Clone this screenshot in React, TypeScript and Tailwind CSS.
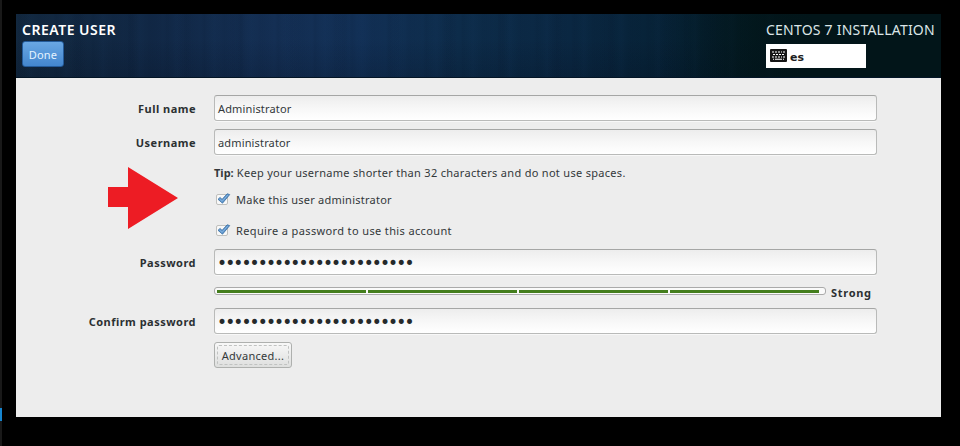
import type { ReactNode } from "react";

const BULLETS = "•".repeat(24);

function Row({ label, className, children }: { label?: string; className: string; children: ReactNode }) {
  return (
    <div className={`flex items-center ${className}`}>
      <div className="flex w-[180px] shrink-0 justify-end whitespace-nowrap pt-[2px] text-[11px] font-bold tracking-[0.48px] text-[#2b3032]">
        {label && <span>{label}</span>}
      </div>
      <div className="ml-[18px] flex h-full w-[663px] items-center">{children}</div>
    </div>
  );
}

function Field({ children }: { children: ReactNode }) {
  return (
    <div className="flex h-[26px] w-full items-center rounded-[3px] border border-[#b9bab9] border-t-[#a5a6a5] bg-linear-to-b from-[#ededed] via-[#f7f7f7] to-white pl-[3px] text-[11px] tracking-[0.15px] text-[#33383a] shadow-[0_1px_0_#f8f8f8]">
      {children}
    </div>
  );
}

function Dots() {
  return <span className="-ml-[1px] whitespace-nowrap pt-[3px] font-['DejaVu_Sans',sans-serif] text-[17px] leading-none tracking-[-1.88px] text-[#25292b]">{BULLETS}</span>;
}

function Check({ children }: { children: ReactNode }) {
  return (
    <>
      <svg className="ml-[1px] shrink-0" width="17" height="16" viewBox="0 0 17 16">
        <rect x="1.5" y="3.5" width="11" height="10" rx="1.5" fill="#f8f8f8" stroke="#c0c0bd" />
        <path d="M3 8.3 5.2 6.4 7 8.4 12.2 2.8 14.7 3.6 7.5 12.2Z" fill="#5b94cc" stroke="#376c9f" strokeWidth=".8" strokeLinejoin="round" />
        <path d="m4.5 8 2.6 2.3 5.8-6.4" fill="none" stroke="#8ab7e2" strokeWidth=".9" />
      </svg>
      <span className="ml-[4px] whitespace-nowrap pt-[2px]">{children}</span>
    </>
  );
}

function Keyboard() {
  return (
    <svg width="17" height="13" viewBox="0 0 17 13" className="mb-[2px] shrink-0">
      <rect width="17" height="13" rx="1" fill="#151515" />
      <path d="M2 3h2m1 0h2m1 0h2m1 0h1m1 0h2M3 5.5h2m1 0h2m1 0h2m1 0h2M2 8h2m1 0h2m1 0h2m1 0h1m1 0h2M3 10.2h1m1 0h7m1 0h1" stroke="#fff" strokeWidth="1.1" />
    </svg>
  );
}

export default function App() {
  return (
    <div className="relative h-[446px] w-[960px] overflow-hidden bg-black pl-4 pt-[14px] font-['Noto_Sans','Open_Sans',sans-serif] text-[#33383a]">
      <div className="absolute left-0 top-0 h-full w-[2px] bg-[#191919]" />
      <div className="absolute left-0 top-[408px] h-[13px] w-[2px] bg-[#1685cf]" />
      <div className="h-[403px] w-[925px] bg-[#ededed]">
        <header className="flex h-16 justify-between border-b border-[#031526] bg-[linear-gradient(90deg,#02151900_70%,#021519_86%),repeating-linear-gradient(90deg,#07162c00_0px,#07162c18_3px,#07162c00_8px,#1c427010_13px,#07162c00_19px,#07162c10_23px,#07162c00_37px),repeating-linear-gradient(90deg,#07162c00_0px,#07162c14_11px,#07162c00_17px,#07162c00_53px),linear-gradient(180deg,#00000000_40%,#00081530),linear-gradient(90deg,#12283f_0%,#112846_15%,#142f54_28%,#123056_37%,#0d2c4a_48%,#0a2742_60%,#062134_72%,#031a22_80%,#021519_86%,#021418_100%)] pl-[6px] pr-[4px]">
          <div className="pt-[7px]">
            <h1 className="h-5 whitespace-nowrap text-[14px] font-semibold leading-[17px] tracking-[0.5px] text-white">CREATE USER</h1>
            <button className="flex h-[26px] w-[42px] items-center justify-center rounded-[3px] border border-[#245b9a] bg-linear-to-b from-[#69a7e3] to-[#4386ce] pt-[2px] text-[11px] tracking-[0.15px] text-[#e4f3ff]">
              Done
            </button>
          </div>
          <div className="w-[171px] pt-[7px]">
            <div className="h-[23px] whitespace-nowrap text-[14px] leading-[17px] tracking-[0.22px] text-[#dce5e7]">CENTOS 7 INSTALLATION</div>
            <div className="flex h-[24px] w-[100px] items-center bg-white pl-1">
              <Keyboard />
              <span className="ml-[3px] pt-[3px] font-['DejaVu_Sans',sans-serif] text-[11px] font-bold leading-none text-[#202020]">es</span>
            </div>
          </div>
        </header>
        <main className="relative pt-[17px] text-[11px] tracking-[0.3px]">
          <svg className="absolute left-[92px] top-[89px]" width="71" height="62" viewBox="0 0 71 62">
            <path d="M0 20h20V0l50 31-50 31V40H0Z" fill="#ed1c24" />
          </svg>
          <Row label="Full name" className="h-[26px]"><Field><span className="pt-[2px]">Administrator</span></Field></Row>
          <Row label="Username" className="mt-2 h-[26px]"><Field><span className="pt-[2px]">administrator</span></Field></Row>
          <Row className="mt-2 h-5"><p className="whitespace-nowrap"><b className="tracking-normal">Tip:</b> Keep your username shorter than 32 characters and do not use spaces.</p></Row>
          <Row className="mt-[6px] h-5"><Check><span className="tracking-[0.24px]">Make this user administrator</span></Check></Row>
          <Row className="mt-[11px] h-5"><Check><span className="tracking-[0.37px]">Require a password to use this account</span></Check></Row>
          <Row label="Password" className="mt-[9px] h-[26px]"><Field><Dots /></Field></Row>
          <Row className="mt-[6px] h-5">
            <div className="grid h-[8px] w-[612px] grid-cols-4 gap-[2px] rounded-[3px] border border-[#aaa] bg-[#fafafa] pb-[1px] pl-[2px] pr-[6px] pt-[2px]">
              <div className="bg-[#437d1c]" /><div className="bg-[#437d1c]" /><div className="bg-[#437d1c]" /><div className="bg-[#437d1c]" />
            </div>
            <span className="ml-[5px] pt-[4px] font-bold tracking-[0.7px] text-[#2b3032]">Strong</span>
          </Row>
          <Row label="Confirm password" className="mt-[7px] h-[26px]"><Field><Dots /></Field></Row>
          <Row className="mt-2 h-[26px]">
            <button className="h-[26px] w-[78px] rounded-[3px] border border-[#aeb0ae] bg-linear-to-b from-[#f8f8f8] to-[#dedfde] p-[2px]">
              <span className="flex h-full items-center justify-center rounded-[2px] border border-dashed border-[#c0c2c1] pt-[2px]">Advanced...</span>
            </button>
          </Row>
        </main>
      </div>
    </div>
  );
}
